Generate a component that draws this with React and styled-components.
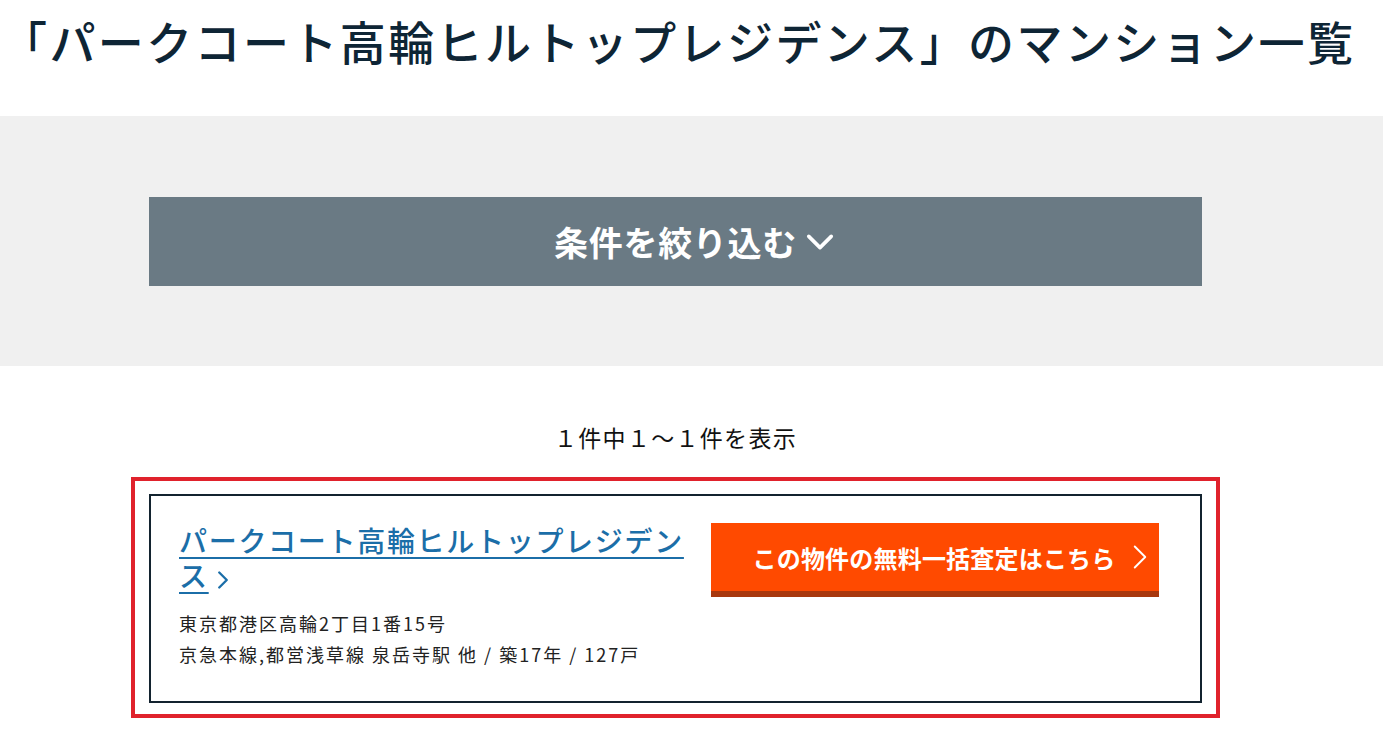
import React from 'react'
import styled, { createGlobalStyle } from 'styled-components';

const GlobalStyle = createGlobalStyle`
  html, body {
    margin: 0;
    padding: 0;
    background: #fff;
    font-family: "Noto Sans CJK JP", "Noto Sans", sans-serif;
  }
`

const Header = styled.header`
  padding: 6px 1px 0;
  height: 116px;
  box-sizing: border-box;
`

const Title = styled.h1`
  margin: 0;
  font-size: 46px;
  line-height: 69px;
  font-weight: 500;
  letter-spacing: 2.4px;
  color: #0e2535;
  white-space: nowrap;
`

const FilterBand = styled.section`
  background: #f0f0f0;
  padding: 81px 0 80px;
`

const FilterButton = styled.button`
  display: flex;
  align-items: center;
  justify-content: center;
  gap: 8px;
  width: 1053px;
  height: 89px;
  margin-left: 149px;
  padding: 0 0 0 38px;
  border: none;
  background: #6a7a84;
  color: #fff;
  font-family: inherit;
  font-size: 34px;
  font-weight: 700;
  letter-spacing: 0.7px;
  cursor: pointer;
`

const Results = styled.main`
  width: 1053px;
  margin-left: 149px;
`

const Count = styled.p`
  margin: 53px 0 22px;
  text-align: center;
  font-size: 23px;
  line-height: 36px;
  letter-spacing: 1.3px;
  color: #111;
`

const Highlight = styled.div`
  margin: 0 -18px;
  border: 4px solid #e0222c;
  padding: 13px 14px 11px;
`

const Card = styled.article`
  display: grid;
  grid-template-columns: 510px 448px;
  column-gap: 22px;
  align-items: start;
  border: 2px solid #13232f;
  padding: 27px 28px 31px;
`

const Info = styled.div`
  display: flex;
  flex-direction: column;
`

const NameLink = styled.a`
  font-size: 28px;
  line-height: 35px;
  letter-spacing: 1.7px;
  color: #1b6ea8;
  font-weight: 500;
  text-decoration: none;

  span {
    text-decoration: underline;
    text-decoration-thickness: 2px;
    text-underline-offset: 5px;
  }

  svg {
    margin-left: 4px;
    vertical-align: -3px;
  }
`

const Meta = styled.div`
  margin-top: 15px;
  font-size: 18px;
  line-height: 31px;
  letter-spacing: 2px;
  color: #222;
`

const AssessButton = styled.button`
  display: flex;
  align-items: center;
  justify-content: center;
  gap: 10px;
  height: 74px;
  padding: 0 0 0 36px;
  border: none;
  border-bottom: 6px solid #a8380e;
  background: #ff4a00;
  color: #fff;
  font-family: inherit;
  font-size: 24px;
  font-weight: 700;
  letter-spacing: 0.2px;
  cursor: pointer;
  box-sizing: border-box;
`

const Chevron = ({ dir = 'right', size = 14, stroke = 2, ...rest }) => (
  <svg width={size} height={size} viewBox="0 0 16 16" fill="none" stroke="currentColor"
    strokeWidth={stroke} strokeLinecap="round" strokeLinejoin="round" {...rest}>
    {dir === 'down'
      ? <polyline points="2,5 8,11 14,5" />
      : <polyline points="5,2 11,8 5,14" />}
  </svg>
)

export default function App() {
  return (
    <>
      <GlobalStyle />
      <Header>
        <Title>「パークコート高輪ヒルトップレジデンス」のマンション一覧</Title>
      </Header>

      <FilterBand>
        <FilterButton>
          条件を絞り込む
          <Chevron dir="down" size={30} stroke={1.9} />
        </FilterButton>
      </FilterBand>

      <Results>
        <Count>１件中１～１件を表示</Count>
        <Highlight>
          <Card>
            <Info>
              <NameLink href="#">
                <span>パークコート高輪ヒルトップレジデンス</span>
                <Chevron size={20} stroke={1.9} />
              </NameLink>
              <Meta>
                <div>東京都港区高輪2丁目1番15号</div>
                <div>京急本線,都営浅草線 泉岳寺駅 他 / 築17年 / 127戸</div>
              </Meta>
            </Info>
            <AssessButton>
              この物件の無料一括査定はこちら
              <Chevron size={28} stroke={1.1} />
            </AssessButton>
          </Card>
        </Highlight>
      </Results>
    </>
  )
}
